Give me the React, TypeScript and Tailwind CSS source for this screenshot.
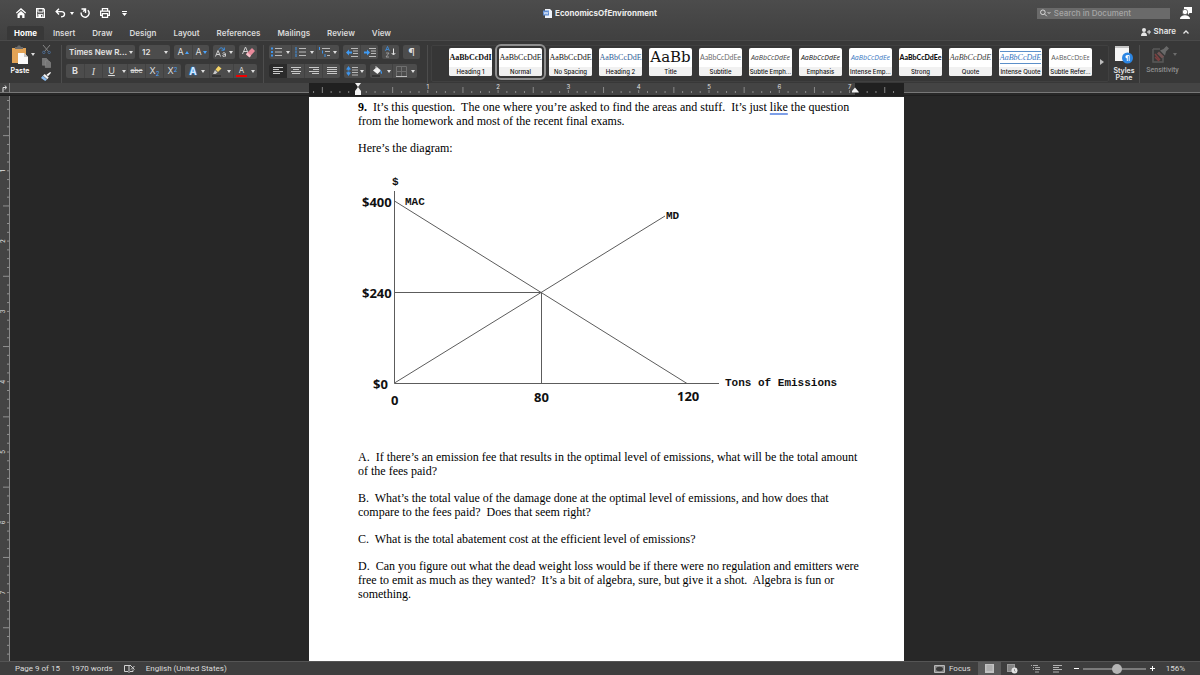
import type { ReactNode } from "react";
import clsx from "clsx";

const INCH = 70.3;

const tabs = ["Home", "Insert", "Draw", "Design", "Layout", "References", "Mailings", "Review", "View"];

const styleTiles = [
  { label: "Heading 1", sample: "AaBbCcDdI", look: "font-['Liberation_Serif',serif] text-[8px] font-bold" },
  { label: "Normal", sample: "AaBbCcDdE", look: "font-['Liberation_Serif',serif] text-[8px]" },
  { label: "No Spacing", sample: "AaBbCcDdE", look: "font-['Liberation_Serif',serif] text-[8px]" },
  { label: "Heading 2", sample: "AaBbCcDdE", look: "font-['Liberation_Serif',serif] text-[8px] text-[#2f6096]" },
  { label: "Title", sample: "AaBb", look: "font-['DejaVu_Serif',serif] text-[15px]" },
  { label: "Subtitle", sample: "AaBbCcDdEe", look: "font-['Lato',sans-serif] text-[7px] text-[#6b6b6b]" },
  { label: "Subtle Emph...", sample: "AaBbCcDdEe", look: "font-['Open_Sans',sans-serif] text-[7px] italic text-[#404040]" },
  { label: "Emphasis", sample: "AaBbCcDdEe", look: "font-['Open_Sans',sans-serif] text-[7px] italic" },
  { label: "Intense Emp...", sample: "AaBbCcDdEe", look: "font-['Open_Sans',sans-serif] text-[7px] italic text-[#3a78bf]" },
  { label: "Strong", sample: "AaBbCcDdEe", look: "font-['Lato',sans-serif] text-[7px] font-black" },
  { label: "Quote", sample: "AaBbCcDdE", look: "font-['Liberation_Serif',serif] text-[8px] italic text-[#404040]" },
  { label: "Intense Quote", sample: "AaBbCcDdE", look: "font-['Liberation_Serif',serif] text-[8px] italic text-[#3a78bf] border-y border-[#5b8fc9]" },
  { label: "Subtle Refer...", sample: "AaBbCcDdEe", look: "font-['Open_Sans',sans-serif] text-[7px] text-[#5a5a5a] [font-variant:small-caps]" },
];

function Caret({ className }: { className?: string }) {
  return (
    <svg viewBox="0 0 4 3" className={clsx("h-[3px] w-1 shrink-0", className)} fill="currentColor" aria-hidden="true">
      <path d="M0 0h4L2 3z" />
    </svg>
  );
}

function Group({ children }: { children: ReactNode }) {
  return <div className="flex h-[14px] overflow-hidden rounded-[2px] bg-[#4c4c4c]">{children}</div>;
}

function Tool({ label, className, children }: { label: string; className?: string; children: ReactNode }) {
  return (
    <button aria-label={label} className={clsx("flex h-full items-center justify-center text-[#dedede]", className)}>
      {children}
    </button>
  );
}

function Separator() {
  return <div className="h-[38px] w-px shrink-0 bg-[#4d4d4d]" />;
}

function Lines({ align }: { align: "left" | "center" | "right" | "full" }) {
  const short = { left: "M0 2.5h6M0 6.5h7", center: "M2 2.5h6M1 6.5h8", right: "M4 2.5h6M3 6.5h7", full: "M0 2.5h10M0 6.5h10" }[align];
  return (
    <svg viewBox="0 0 10 8" className="h-2 w-[10px]" stroke="#c8c8c8" aria-hidden="true">
      <path d={`M0 .5h10M0 4.5h10${short}`} />
    </svg>
  );
}

function ListIcon({ kind }: { kind: "bullet" | "number" | "multi" }) {
  return (
    <svg viewBox="0 0 11 10" className="h-[10px] w-[11px]" aria-hidden="true">
      {kind === "multi" ? (
        <>
          <path d="M3 1.5h8M6 4.5h5M8 8.5h3" stroke="#b9b9b9" />
          <path d="M.5 0v3M3.5 3.5v3M6 7v3" stroke="#3f94e9" />
        </>
      ) : (
        <>
          <path d="M4 1.5h7M4 5h7M4 8.5h7" stroke="#b9b9b9" />
          {kind === "bullet" ? (
            <path d="M0 .5h2v2H0zM0 4h2v2H0zM0 7.5h2v2H0z" fill="#3f94e9" />
          ) : (
            <path d="M1 0v3M1 3.5v3M1 7v3" stroke="#3f94e9" />
          )}
        </>
      )}
    </svg>
  );
}

function IndentIcon({ out }: { out?: boolean }) {
  return (
    <svg viewBox="0 0 12 9" className="h-[9px] w-3" aria-hidden="true">
      <path d="M5 .5h7M7 3h5M7 5.5h5M5 8.5h7" stroke="#b9b9b9" />
      <path d={out ? "M0 4.5l3-3v2h3v2H3v2z" : "M6 4.5l-3-3v2H0v2h3v2z"} fill="#3f9bf5" />
    </svg>
  );
}

function TitleBar() {
  return (
    <header className="grid h-[26px] grid-cols-[1fr_auto_1fr] items-center">
      <div className="flex items-center pl-4 text-white">
        <button aria-label="Home" className="mr-[10px]">
          <svg viewBox="0 0 10 10" className="size-[10px]" fill="none" stroke="currentColor">
            <path d="M.3 5L5 .9 9.700 5" strokeWidth="1.3" />
            <path d="M1.500 6L5 3l3.500 3v4H6.200V7.200H3.800V10H1.500z" fill="currentColor" stroke="none" />
          </svg>
        </button>
        <button aria-label="Save" className="mr-[10px]">
          <svg viewBox="0 0 9 10" className="h-[10px] w-[9px]" fill="none" stroke="currentColor">
            <path d="M.6.6h7L8.4 1.8v7.6H.6z" strokeWidth="1.2" />
            <path d="M2 1v3h5V1M2.2 9.3V6.4h4.6v2.9" strokeWidth="1" />
            <path d="M3 7h2v2.4H3z" fill="currentColor" stroke="none" />
          </svg>
        </button>
        <button aria-label="Undo" className="mr-1 flex items-center gap-1">
          <svg viewBox="0 0 11 10" className="h-[10px] w-[11px]" fill="none" stroke="currentColor" strokeWidth="1.4">
            <path d="M4 .8L1.2 3.6 4 6.4M1.4 3.6h5.2c4 0 4 5.3-.6 5.3" />
          </svg>
          <Caret />
        </button>
        <button aria-label="Repeat" className="ml-[2px] mr-[10px]">
          <svg viewBox="0 0 10 10" className="size-[10px]" fill="none" stroke="currentColor" strokeWidth="1.4">
            <path d="M1.200 4.500A4 4 0 1 0 7.800 2.200M1.500 1h4v4M5.300 1.200L3.200 3.600" />
          </svg>
        </button>
        <button aria-label="Print" className="mr-3">
          <svg viewBox="0 0 10 10" className="size-[10px]" fill="none" stroke="currentColor" strokeWidth="1.2">
            <path d="M2.4 3V.6h5.2V3M2.4 7.3H.6V3.2h8.8v4.1H7.6M2.4 5.6h5.2v3.8H2.4z" />
          </svg>
        </button>
        <button aria-label="Customize toolbar">
          <svg viewBox="0 0 5 5" className="size-[5px]" fill="currentColor">
            <path d="M0 0h5v1H0zM0 2h5L2.5 5z" />
          </svg>
        </button>
      </div>
      <h1 className="flex items-center gap-[3px] text-[8px] font-bold text-[#ededed]">
        <svg viewBox="0 0 9 9" className="size-[9px]" aria-hidden="true">
          <path d="M2 0h5l2 2v7H2z" fill="#eef3fb" />
          <path d="M0 1.500h6v5H0z" fill="#5b8ad2" />
          <path d="M1 2.800l.9 2.500L3 3l1.100 2.300.9-2.500" stroke="#fff" strokeWidth=".7" fill="none" />
        </svg>
        EconomicsOfEnvironment
      </h1>
      <div className="flex items-center justify-end gap-[10px] pr-2">
        <label className="flex h-[11px] w-[133px] items-center gap-[3px] bg-[#6a6a6a] pl-[3px]">
          <svg viewBox="0 0 12 8" className="h-2 w-3" fill="none" stroke="#e2e2e2" aria-hidden="true">
            <circle cx="3.2" cy="3.2" r="2.6" />
            <path d="M5.200 5.200L7.600 7.600M8.600 3l1.500 1.600L11.600 3" />
          </svg>
          <input
            type="search"
            aria-label="Search in Document"
            placeholder="Search in Document"
            className="w-full min-w-0 bg-transparent text-[8px] font-medium leading-[11px] text-white outline-none placeholder:text-[#a6a6a6]"
          />
        </label>
        <button aria-label="Account">
          <svg viewBox="0 0 12 12" className="size-3" fill="#fff">
            <path d="M4 0h8v6H9.500L8 8V6H4z" />
            <circle cx="5" cy="5" r="2.700" stroke="#4a4a4a" strokeWidth=".7" />
            <path d="M0 12c0-5 10-5 10 0z" />
          </svg>
        </button>
      </div>
    </header>
  );
}

function TabRow() {
  return (
    <nav className="flex h-[14px] items-stretch justify-between pl-[7px] pr-[11px]">
      <div className="flex gap-px">
        {tabs.map((tab) => (
          <button
            key={tab}
            className={clsx(
              "text-[8px] leading-[12px]",
              tab === "Home" ? "rounded-t-[2px] bg-[#383838] px-[7px] font-bold text-white" : "px-2 font-semibold text-[#dadada]"
            )}
          >
            {tab}
          </button>
        ))}
      </div>
      <div className="flex items-center pb-[3px]">
        <button className="flex items-center gap-[3px] text-[8px] font-semibold leading-[11px] text-[#e6e6e6]">
          <svg viewBox="0 0 10 8" className="h-2 w-[10px]" fill="currentColor" aria-hidden="true">
            <circle cx="3" cy="2" r="2" />
            <path d="M0 8c0-5 6-5 6 0zM7.600 2h1v1.600h1.400v1H8.600v1.600h-1V4.600H6v-1h1.600z" />
          </svg>
          Share
        </button>
        <button aria-label="Collapse ribbon" className="ml-[7px]">
          <svg viewBox="0 0 6 4" className="h-1 w-[6px]" fill="none" stroke="#e6e6e6" strokeWidth="1.3">
            <path d="M.5 3.500L3 1l2.500 2.500" />
          </svg>
        </button>
      </div>
    </nav>
  );
}

function ClipboardGroup() {
  return (
    <div className="flex h-[38px] w-[61px] shrink-0 pl-[9px] text-[#dedede]">
      <div className="flex w-[22px] flex-col items-center">
        <button className="flex flex-col items-center gap-[3px] text-[7px] font-semibold leading-[7px] text-white">
          <svg viewBox="0 0 16 19" className="h-[19px] w-4" aria-hidden="true">
            <path d="M0 3h14v15H0z" fill="#e2a356" />
            <path d="M3 4h8V2H9L8 .5H6L5 2H3z" fill="#6b6b6b" />
            <path d="M6 8h6l4 4v7H6z" fill="#fafafa" />
            <path d="M12 8v4h4z" fill="#c9c9c9" />
          </svg>
          Paste
        </button>
      </div>
      <Caret className="mt-[8px]" />
      <div className="ml-[6px] flex flex-col items-center gap-1">
        <button aria-label="Cut">
          <svg viewBox="0 0 9 9" className="size-[9px]" fill="none" stroke="#858585">
            <path d="M1 0l5.500 6.500M8 0L2.500 6.500" />
            <circle cx="1.800" cy="7.400" r="1.200" stroke="#4c6b90" />
            <circle cx="7.200" cy="7.400" r="1.200" stroke="#4c6b90" />
          </svg>
        </button>
        <button aria-label="Copy">
          <svg viewBox="0 0 9 10" className="h-[10px] w-[9px]" fill="#777" stroke="#929292" strokeWidth=".5">
            <path d="M.3.3h4l1.400 1.400v5.500H.3z" />
            <path d="M3.300 2.800h3.600l1.800 1.800v5H3.300z" />
          </svg>
        </button>
        <button aria-label="Format painter">
          <svg viewBox="0 0 10 9" className="h-[9px] w-[10px]">
            <path d="M9.200 0l.8.8L7 4.200 5.500 2.800z" fill="#fff" />
            <path d="M3.700 2l4 3.600L6.200 7.200 2 3.500z" fill="#f0f0f0" />
            <path d="M1.700 3.800L6 7.600 4.200 9 0 6z" fill="#8dbdf0" />
          </svg>
        </button>
      </div>
    </div>
  );
}

const selectLook = "h-[14px] appearance-none rounded-[2px] bg-[#4c4c4c] text-[8px] leading-[14px] font-semibold text-[#e4e4e4] outline-none";

function FontGroup() {
  return (
    <div className="flex shrink-0 flex-col gap-[5px] px-1 text-[#dedede]">
      <div className="flex gap-1">
        <label className="relative flex">
          <select aria-label="Font" className={clsx(selectLook, "w-[69px] pl-[3px]")}>
            <option>Times New R...</option>
          </select>
          <Caret className="pointer-events-none absolute right-[2px] top-[6px]" />
        </label>
        <label className="relative flex">
          <select aria-label="Font size" className={clsx(selectLook, "w-[31px] pl-[3px]")}>
            <option>12</option>
          </select>
          <Caret className="pointer-events-none absolute right-[2px] top-[6px]" />
        </label>
        <Group>
          <Tool label="Grow font" className="w-[18px] gap-px text-[9px]">
            A<Caret className="rotate-180 text-[#4ba3fb]" />
          </Tool>
          <Tool label="Shrink font" className="w-[17px] gap-px border-l border-[#424242] text-[9px]">
            A<Caret className="text-[#4ba3fb]" />
          </Tool>
        </Group>
        <Group>
          <Tool label="Change case" className="w-[22px] gap-[2px]">
            <svg viewBox="0 0 12 10" className="h-[10px] w-3" fill="none" aria-hidden="true">
              <path d="M.5 9.500L3 3.500l2.500 6M1.300 7.500h3.400M10.500 9.500V7c0-1.600-2.800-1.600-2.800-.3M10.500 7.500c-3-.3-3.500 2-2 2 1 0 2-.7 2-1.400" stroke="#cfcfcf" />
              <path d="M4 2.500C5.500 0 8 .5 8.500 3M6.500 3.200h2.800V.5" stroke="#3f94e9" />
            </svg>
            <Caret />
          </Tool>
        </Group>
        <Group>
          <Tool label="Clear formatting" className="w-[18px]">
            <svg viewBox="0 0 13 12" className="h-3 w-[13px]" aria-hidden="true">
              <path d="M.5 8L3.500 1l3 7M1.500 5.500h4" fill="none" stroke="#cfcfcf" />
              <path d="M10 2l3 3-5.500 6L4 8z" fill="#e8899a" />
              <path d="M5.500 6.500L9 9.800 7.500 11.500 4 8.500z" fill="#f5c3cb" />
            </svg>
          </Tool>
        </Group>
      </div>
      <div className="flex gap-1">
        <Group>
          <Tool label="Bold" className="w-[18px] text-[9px] font-bold">B</Tool>
          <Tool label="Italic" className="w-[18px] border-l border-[#424242] font-['Liberation_Serif',serif] text-[10px] italic">I</Tool>
          <Tool label="Underline" className="w-[18px] border-l border-[#424242] text-[9px] underline">U</Tool>
          <Tool label="Underline style" className="w-[7px]"><Caret /></Tool>
          <Tool label="Strikethrough" className="w-[18px] border-l border-[#424242] text-[7px] line-through">abc</Tool>
          <Tool label="Subscript" className="w-[18px] border-l border-[#424242] text-[9px]">
            X<span className="mt-1 text-[6px] text-[#4ba3fb]">2</span>
          </Tool>
          <Tool label="Superscript" className="w-[18px] border-l border-[#424242] text-[9px]">
            X<span className="mb-1 text-[6px] text-[#4ba3fb]">2</span>
          </Tool>
        </Group>
        <Group>
          <Tool label="Text effects" className="w-[24px] gap-1 text-[10px] font-bold">
            <span className="text-[#d3e9ff] [text-shadow:0_0_2px_#1e88f5,0_0_1px_#1e88f5]">A</span>
            <Caret />
          </Tool>
          <Tool label="Highlight" className="w-[24px] gap-[5px] border-l border-[#424242]">
            <svg viewBox="0 0 10 11" className="h-[11px] w-[10px]" aria-hidden="true">
              <path d="M6.500 0L9.500 2.500 6 6 3.500 3.500z" fill="#f6d466" />
              <path d="M3 4l2.500 2.500-2 1.500H1z" fill="#c8c8c8" />
              <path d="M0 9h9v2H0z" fill="#343434" />
            </svg>
            <Caret />
          </Tool>
          <Tool label="Font color" className="w-[24px] gap-[4px] border-l border-[#424242]">
            <span className="border-b-2 border-[#f00000] px-[3px] text-[8px] leading-[9px]">A</span>
            <Caret />
          </Tool>
        </Group>
      </div>
    </div>
  );
}

function ParagraphGroup() {
  return (
    <div className="flex shrink-0 flex-col gap-[5px] pl-[5px] pr-[7px]">
      <div className="flex gap-1">
        <Group>
          <Tool label="Bullets" className="w-[22px] gap-1"><ListIcon kind="bullet" /><Caret /></Tool>
          <Tool label="Numbering" className="w-[25px] gap-1 border-l border-[#424242]"><ListIcon kind="number" /><Caret /></Tool>
          <Tool label="Multilevel list" className="w-[23px] gap-[3px] border-l border-[#424242]"><ListIcon kind="multi" /><Caret /></Tool>
        </Group>
        <Group>
          <Tool label="Decrease indent" className="w-[17px]"><IndentIcon out /></Tool>
          <Tool label="Increase indent" className="w-[18px] border-l border-[#424242]"><IndentIcon /></Tool>
        </Group>
        <Group>
          <Tool label="Sort" className="w-[17px]">
            <svg viewBox="0 0 11 12" className="h-3 w-[11px]" fill="none" aria-hidden="true">
              <path d="M.5 5L2.500 .5l2 4.500M1.200 3.500h2.600" stroke="#3f94e9" strokeWidth=".8" />
              <path d="M1 7h3L1 11h3" stroke="#a9a9a9" strokeWidth=".8" />
              <path d="M8.500 2.500v6M6.700 7l1.800 2 1.800-2" stroke="#e4e4e4" />
            </svg>
          </Tool>
        </Group>
        <Group>
          <Tool label="Show formatting marks" className="w-[17px] text-[11px]">¶</Tool>
        </Group>
      </div>
      <div className="flex gap-1">
        <Group>
          <Tool label="Align left" className="w-[18px] bg-[#2b2b2b]"><Lines align="left" /></Tool>
          <Tool label="Center" className="w-[17px]"><Lines align="center" /></Tool>
          <Tool label="Align right" className="w-[18px] border-l border-[#424242]"><Lines align="right" /></Tool>
          <Tool label="Justify" className="w-[18px] border-l border-[#424242]"><Lines align="full" /></Tool>
        </Group>
        <Group>
          <Tool label="Line spacing" className="w-[22px] gap-[2px]">
            <svg viewBox="0 0 12 10" className="h-[10px] w-3" aria-hidden="true">
              <path d="M2.500 0L5 3.500H3.500v3H5L2.500 10 0 6.500h1.500v-3H0z" fill="#3f94e9" />
              <path d="M0 5h5" stroke="#4c4c4c" />
              <path d="M6 1.500h6M6 4h6M6 6.500h6M6 9h6" stroke="#b9b9b9" />
            </svg>
            <Caret />
          </Tool>
        </Group>
        <Group>
          <Tool label="Shading" className="w-[22px] gap-[5px]">
            <svg viewBox="0 0 10 11" className="h-[11px] w-[10px]" aria-hidden="true">
              <path d="M5 1l4 3.500L5.500 8 1 4.500z" fill="#f0f0f0" />
              <path d="M4 0v4" stroke="#ddd" strokeWidth=".8" />
              <path d="M8 3.500c2.500 2 2.500 4 1 4.500z" fill="#3f94e9" />
              <path d="M0 9h8v2H0z" fill="#343434" />
            </svg>
            <Caret />
          </Tool>
          <Tool label="Borders" className="w-[25px] gap-1 border-l border-[#424242]">
            <svg viewBox="0 0 11 11" className="size-[11px]" fill="none" stroke="#6f6f6f" aria-hidden="true">
              <path d="M.5.5h10M.5.5v10M10.500.5v10M5.500.5v10M.5 5.500h10" />
              <path d="M0 10.500h11" stroke="#bdbdbd" />
            </svg>
            <Caret />
          </Tool>
        </Group>
      </div>
    </div>
  );
}

function StyleGallery() {
  return (
    <div className="ml-[3px] flex h-[37px] min-w-0 flex-1 items-start gap-[7px] rounded-[2px] border border-[#404040] bg-[#363636] pl-[17px] pr-1 pt-[2px]">
      {styleTiles.map((tile) => (
        <button
          key={tile.label}
          className={clsx(
            "flex h-7 w-[43px] shrink-0 flex-col rounded-[2px] bg-white text-[#111]",
            tile.label === "Normal" && "outline-2 outline-offset-2 outline-[#8f8f8f]"
          )}
        >
          <span className="flex h-[19px] w-full items-center justify-center">
            <span className={clsx("whitespace-nowrap leading-[11px]", tile.look)}>{tile.sample}</span>
          </span>
          <span className="flex h-[9px] w-full justify-center whitespace-nowrap rounded-b-[2px] bg-[#f1f1f1] text-[6px] font-medium leading-[9px]">
            {tile.label}
          </span>
        </button>
      ))}
      <button aria-label="More styles" className="ml-auto flex h-7 items-center">
        <svg viewBox="0 0 4 6" className="h-[6px] w-1" fill="#bdbdbd">
          <path d="M0 0l4 3-4 3z" />
        </svg>
      </button>
    </div>
  );
}

function Ribbon() {
  return (
    <section className="flex h-[43px] items-start border-t border-[#4a4a4a] bg-[#383838] pt-1">
      <ClipboardGroup />
      <Separator />
      <FontGroup />
      <div className="w-[2px]" />
      <Separator />
      <ParagraphGroup />
      <Separator />
      <StyleGallery />
      <button className="flex w-[30px] shrink-0 flex-col items-center text-[7px] font-semibold leading-[7px] text-[#e8e8e8]">
        <svg viewBox="0 0 18 19" className="mb-[3px] h-[19px] w-[18px]" aria-hidden="true">
          <path d="M0 1h14v15H0z" fill="#f6f6f6" />
          <path d="M0 1h14v2H0z" fill="#c5c5c5" />
          <circle cx="12.500" cy="13" r="5.500" fill="#2c86e3" />
          <path d="M12.300 16v-5.500h1.900V16" fill="none" stroke="#fff" strokeWidth=".9" />
          <path d="M12.500 10c-2.700 0-2.700 3.500 0 3.500z" fill="#fff" />
        </svg>
        Styles
        <br />
        Pane
      </button>
      <Separator />
      <button className="mr-[15px] flex w-[45px] shrink-0 flex-col items-center font-['Roboto',sans-serif] text-[7px] font-medium leading-[7px] text-[#8f8f8f]">
        <span className="mb-[3px] flex items-center gap-1 pl-1">
          <svg viewBox="0 0 17 19" className="h-[19px] w-[17px]" aria-hidden="true">
            <path d="M1 4h7M1 4v13h10v-6" stroke="#595959" fill="none" strokeWidth="1.500" />
            <path d="M3 9l5 6M3 12l4 4" stroke="#7d4040" strokeWidth="1.500" />
            <path d="M5 8.500l5 5 2-2-5-5z" fill="#735454" />
            <path d="M8 5.500l5 5 1-4 3-3-2.500-2.500-3 3z" fill="#696969" />
          </svg>
          <Caret className="opacity-60" />
        </span>
        Sensitivity
      </button>
    </section>
  );
}

function HorizontalRuler() {
  const ticks = Array.from({ length: 67 }, (_, i) => i - 5).filter((i) => 48 + (i * INCH) / 8 < 594);
  return (
    <div className="relative flex h-[13px] shrink-0 justify-center border-b border-[#1e1e1e] bg-[#444] pl-[13px]">
      <div className="absolute bottom-0 left-0 h-[3px] w-full border-t border-[#777] bg-[#272727]" />
      <div className="absolute left-0 top-0 flex h-[10px] w-[10px] items-center justify-center border-r border-[#808080]">
        <svg viewBox="0 0 5 7" className="h-[7px] w-[5px]" fill="none" stroke="#e0e0e0" aria-hidden="true">
          <path d="M1 7V2.500h3M3 .5l1.500 2L3 4.500" />
        </svg>
      </div>
      <svg viewBox="0 0 595 12" className="relative h-3 w-[595px]" aria-hidden="true">
        <path d="M0 0h595v12H0z" fill="#444" />
        <path d="M0 0h48v12H0zM546 0h49v12h-49z" fill="#202020" />
        {ticks.map((i) => (
          <path
            key={i}
            d={`M${48.5 + (i * INCH) / 8} 10v${i % 8 === 0 ? -3 : i % 4 === 0 ? -6 : -2}`}
            stroke="#9c9c9c"
            strokeWidth=".8"
          />
        ))}
        {[1, 2, 3, 4, 5, 6, 7].map((n) => (
          <text key={n} x={48.5 + n * INCH} y="6" textAnchor="middle" fontSize="6" fill="#e2e2e2">
            {n}
          </text>
        ))}
        <path d="M46 0h6l-3 4zM46 12V8l3-4 3 4v4zM543 9.500V8l3-3.500L549 8v1.500z" fill="#f2f2f2" />
      </svg>
    </div>
  );
}

function VerticalRuler() {
  return (
    <svg className="h-full w-[10px] shrink-0 border-r border-[#8a8a8a] bg-[#444]" aria-hidden="true">
      {Array.from({ length: 64 }, (_, i) => (
        <path
          key={i}
          d={`M9 ${4.5 + (i * INCH) / 8}h${i % 4 === 0 && i % 8 !== 0 ? -6 : -2}`}
          stroke="#a5a5a5"
          strokeWidth=".8"
        />
      ))}
      {[1, 2, 3, 4, 5, 6, 7].map((n) => (
        <text key={n} transform={`translate(5 ${4.5 + n * INCH}) rotate(-90)`} textAnchor="middle" fontSize="6" fill="#e2e2e2">
          {n}
        </text>
      ))}
    </svg>
  );
}

// marginal abatement cost vs. marginal damage
function Diagram() {
  return (
    <svg
      viewBox="0 0 486 240"
      className="h-[240px] w-[486px]"
      role="img"
      aria-label="MAC and MD curves crossing at 80 tons and $240"
    >
      <path
        d="M36.500 16v192.500H361M36.500 117.500h147v91M36.500 26L329 208.500M36.500 208L307 41"
        fill="none"
        stroke="#5c5c5c"
      />
      <g fontFamily="'Open Sans', sans-serif" fontSize="13" fontWeight="700" fill="#111">
        <text x="4" y="32">$400</text>
        <text x="4" y="123">$240</text>
        <text x="15" y="214">$0</text>
        <text x="33" y="230">0</text>
        <text x="176" y="227">80</text>
        <text x="319" y="226">120</text>
      </g>
      <g fontFamily="'Liberation Mono', monospace" fontSize="11" fontWeight="700" fill="#111">
        <text x="34" y="10">$</text>
        <text x="47" y="30">MAC</text>
        <text x="308" y="44">MD</text>
        <text x="367" y="211">Tons of Emissions</text>
      </g>
    </svg>
  );
}

function Page() {
  return (
    <article className="h-full w-[595px] shrink-0 overflow-hidden whitespace-nowrap bg-white pl-[49px] pt-[3px] font-['Liberation_Serif',serif] text-[12px] leading-[14px] text-black">
      <div className="flex flex-col gap-[13px]">
        <p>
          <b>9.</b>&nbsp; It’s this question.&nbsp; The one where you’re asked to find the areas and stuff.&nbsp; It’s just{" "}
          <span className="underline decoration-[#7d9fe8] decoration-2 underline-offset-2">like</span> the question
          <br />
          from the homework and most of the recent final exams.
        </p>
        <p>Here’s the diagram:</p>
      </div>
      <div className="pb-[35px] pt-5">
        <Diagram />
      </div>
      <div className="flex flex-col gap-[13px]">
        <p>
          A.&nbsp; If there’s an emission fee that results in the optimal level of emissions, what will be the total amount
          <br />
          of the fees paid?
        </p>
        <p>
          B.&nbsp; What’s the total value of the damage done at the optimal level of emissions, and how does that
          <br />
          compare to the fees paid?&nbsp; Does that seem right?
        </p>
        <p>C.&nbsp; What is the total abatement cost at the efficient level of emissions?</p>
        <p>
          D.&nbsp; Can you figure out what the dead weight loss would be if there were no regulation and emitters were
          <br />
          free to emit as much as they wanted?&nbsp; It’s a bit of algebra, sure, but give it a shot.&nbsp; Algebra is fun or
          <br />
          something.
        </p>
      </div>
    </article>
  );
}

function StatusBar() {
  return (
    <footer className="flex h-[14px] shrink-0 items-center justify-between border-t border-[#555] bg-[#3e3e3e] px-[15px] font-['Roboto',sans-serif] text-[8px] text-[#dcdcdc]">
      <div className="flex items-center gap-[11px]">
        <span>Page 9 of 15</span>
        <span>1970 words</span>
        <button aria-label="Proofing">
          <svg viewBox="0 0 11 9" className="h-[9px] w-[11px]" fill="none" stroke="#d0d0d0">
            <path d="M7 1.500H.5v6H4l1 1 1-1h3v-2M5 1.500v6M7 2l3.500 3.500M10.500 2L7 5.500" />
          </svg>
        </button>
        <button>English (United States)</button>
      </div>
      <div className="flex h-full items-center">
        <button className="mr-[7px] flex items-center gap-1">
          <svg viewBox="0 0 11 8" className="h-2 w-[11px]" aria-hidden="true">
            <path d="M.5.5h10v7H.5z" fill="none" stroke="#b8b8b8" />
            <path d="M1 1h9v6H1z" fill="#8a8a8a" />
            <ellipse cx="5.500" cy="4" rx="3.500" ry="2.200" fill="#3a3a3a" />
          </svg>
          Focus
        </button>
        <button aria-label="Print layout" className="flex h-full w-[23px] items-center justify-center bg-[#5a5a5a]">
          <svg viewBox="0 0 9 9" className="size-[9px]">
            <path d="M0 0h9v9H0z" fill="#c2c2c2" />
            <path d="M1.500 2h6M1.500 4h6M1.500 6h6" stroke="#8a8a8a" strokeWidth=".7" />
          </svg>
        </button>
        <button aria-label="Web layout" className="ml-[6px]">
          <svg viewBox="0 0 11 10" className="h-[10px] w-[11px]">
            <path d="M0 0h8v8H0z" fill="#9b9b9b" />
            <path d="M1 2h6M1 4h6M1 6h6" stroke="#5a5a5a" strokeWidth=".7" />
            <circle cx="7.500" cy="6.500" r="3" fill="#e5e5e5" />
            <path d="M7.500 5v2l1 .5" stroke="#666" strokeWidth=".6" fill="none" />
          </svg>
        </button>
        <button aria-label="Outline" className="ml-[13px]">
          <svg viewBox="0 0 9 8" className="h-2 w-[9px]" stroke="#a9a9a9">
            <path d="M0 .5h1M2 .5h5M2 2.500h1M4 2.500h5M2 4.500h1M4 4.500h5M4 7h4" />
          </svg>
        </button>
        <button aria-label="Draft" className="ml-[13px]">
          <svg viewBox="0 0 9 8" className="h-2 w-[9px]" stroke="#b3b3b3">
            <path d="M0 .5h9M0 2.500h6M0 4.500h9M0 7h6" />
          </svg>
        </button>
        <button aria-label="Zoom out" className="ml-3">
          <svg viewBox="0 0 5 5" className="size-[5px]" stroke="#fff">
            <path d="M0 2.500h5" />
          </svg>
        </button>
        <input
          type="range"
          aria-label="Zoom"
          min={10}
          max={300}
          defaultValue={172}
          className="mx-1 h-[10px] w-[63px] appearance-none bg-transparent [&::-webkit-slider-runnable-track]:h-[2px] [&::-webkit-slider-runnable-track]:bg-[#7b7b7b] [&::-webkit-slider-thumb]:-mt-1 [&::-webkit-slider-thumb]:size-[10px] [&::-webkit-slider-thumb]:appearance-none [&::-webkit-slider-thumb]:rounded-full [&::-webkit-slider-thumb]:bg-[#b5b5b5]"
        />
        <button aria-label="Zoom in" className="mr-[11px]">
          <svg viewBox="0 0 5 5" className="size-[5px]" stroke="#fff">
            <path d="M0 2.500h5M2.500 0v5" />
          </svg>
        </button>
        <span>156%</span>
      </div>
    </footer>
  );
}

export default function App() {
  return (
    <div className="flex h-screen flex-col overflow-hidden bg-[#272727] font-['Inter',sans-serif]">
      <div className="shrink-0 bg-linear-to-b from-[#4c4c4c] to-[#404040]">
        <TitleBar />
        <TabRow />
      </div>
      <Ribbon />
      <HorizontalRuler />
      <main className="flex min-h-0 flex-1">
        <VerticalRuler />
        <div className="flex flex-1 justify-center pl-[3px] pt-px">
          <Page />
        </div>
      </main>
      <StatusBar />
    </div>
  );
}
